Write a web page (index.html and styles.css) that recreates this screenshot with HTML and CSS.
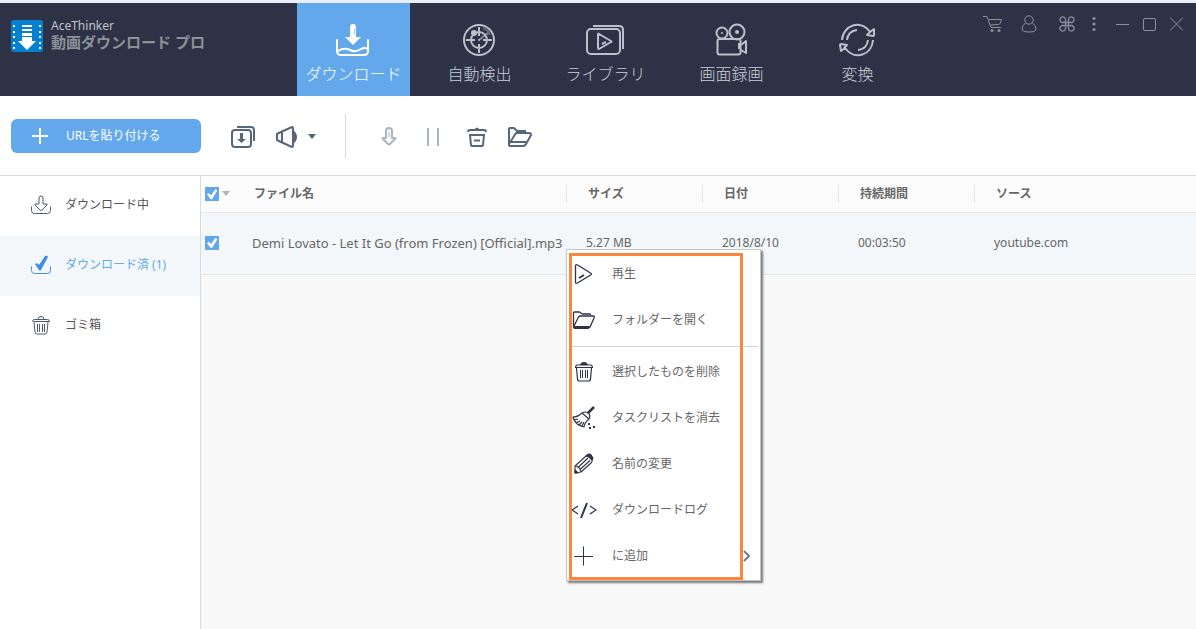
FILE: index.html
```html
<!DOCTYPE html>
<html lang="ja">
<head>
<meta charset="utf-8">
<title>AceThinker 動画ダウンロード プロ</title>
<link rel="stylesheet" href="styles.css">
</head>
<body>
<div class="app">
  <header class="titlebar">
    <div class="brand">
      <svg class="brand-logo" width="32" height="32" viewBox="0 0 32 32" aria-hidden="true">
        <rect width="32" height="32" rx="3" fill="#0580cf"/>
        <g fill="#fff">
          <path d="M2 5h2v2H2zM2 11h2v2H2zM2 16h2v2H2zM2 22h2v2H2zM2 27h2v2H2zM28 5h2v2h-2zM28 11h2v2h-2zM28 16h2v2h-2zM28 22h2v2h-2zM28 27h2v2h-2z"/>
          <path d="M11 5h10v2H11zM11 9h10v2H11zM11 13h10v3H11zM11 17h10v4h4l-9 9-9-9h4z"/>
        </g>
      </svg>
      <div class="brand-text">
        <span class="brand-maker">AceThinker</span>
        <span class="brand-name">動画ダウンロード プロ</span>
      </div>
    </div>
    <nav class="tabs">
      <button class="tab tab-active">
        <svg width="36" height="34" viewBox="0 0 36 34" fill="none" stroke="#fff" stroke-width="2" stroke-linecap="round">
          <path d="M17 1c2 0 3 1 3 3v10h5l-8 8-8-8h5V4c0-2 1-3 3-3z" fill="#fff" stroke="none"/>
          <path d="M18.500 6v5" stroke="#9cc8f4" stroke-width="1"/>
          <path d="M1 17v11q0 4 4 4h23q4 0 4-4V17"/>
          <path d="M2 28c5-3 8-3 12-1s8 1 11-1q4-2 7 0"/>
        </svg>
        <span>ダウンロード</span>
      </button>
      <button class="tab">
        <svg width="34" height="34" viewBox="0 0 34 34" fill="none" stroke="#bac1cb" stroke-width="2">
          <circle cx="16" cy="17" r="15"/><circle cx="16" cy="17" r="8"/>
          <path d="M16 4v4M16 26v4M3 17h4M25 17h4M16 10v3M16 21v3M9 17h3M20 17h3"/>
          <path d="M16 17l9-7" opacity=".6"/><path d="M20 5c3 1 6 4 7 7" opacity=".4"/>
          <circle cx="11" cy="10" r="3" fill="#bac1cb" stroke="none"/><circle cx="16" cy="17" r="1" fill="#bac1cb" stroke="none"/>
        </svg>
        <span>自動検出</span>
      </button>
      <button class="tab">
        <svg width="40" height="34" viewBox="0 0 40 34" fill="none" stroke="#bac1cb" stroke-width="2" stroke-linejoin="round">
          <rect x="1" y="6" width="33" height="25" rx="4"/>
          <path d="M7 3h26q4 0 4 4v19"/>
          <path d="M12 11q0-1 1 0l12 7q1 1 0 1l-12 7q-1 0-1-1z"/><path d="M16 21l4-2"/>
        </svg>
        <span>ライブラリ</span>
      </button>
      <button class="tab">
        <svg width="34" height="34" viewBox="0 0 34 34" fill="none" stroke="#bac1cb" stroke-width="2" stroke-linejoin="round">
          <circle cx="7" cy="10" r="5.500"/><circle cx="22" cy="9" r="7.500"/>
          <circle cx="7" cy="10" r="1" fill="#bac1cb" stroke="none"/><circle cx="22" cy="9" r="2" fill="#bac1cb" stroke="none"/>
          <rect x="2.500" y="16" width="23" height="15.500" rx="2"/>
          <path d="M26 22l5-4v12l-5-3M24 20v6"/>
        </svg>
        <span>画面録画</span>
      </button>
      <button class="tab">
        <svg width="38" height="34" viewBox="0 0 38 34" fill="none" stroke="#bac1cb" stroke-width="2" stroke-linejoin="round">
          <path d="M3 17C4 2 22-4 31 9l4-3v6q0 1-1 1l-6-1 3-3"/>
          <path d="M34 17c-1 15-18 21-28 8l-4 3-1-6q0-1 1-1l6 1-3 3"/>
          <path d="M8 17q1-9 10-10M29 17q-1 9-10 10"/>
        </svg>
        <span>変換</span>
      </button>
    </nav>
    <div class="window-tools">
      <button aria-label="カート"><svg width="20" height="18" viewBox="0 0 20 18" fill="none" stroke="#8b919b"><path d="M0 1.500h4l4 11h10M6 4.500h12.500q-1 5-3 5l-8 .500"/><circle cx="9" cy="15.500" r="1.500" fill="#8b919b" stroke="none"/><circle cx="16" cy="15.500" r="1.500" fill="#8b919b" stroke="none"/></svg></button>
      <button class="tool-user" aria-label="アカウント"><svg width="16" height="18" viewBox="0 0 16 18" fill="none" stroke="#8b919b"><circle cx="8" cy="5" r="4.200"/><path d="M4.500 8Q1 10.500 1 14q0 3 7 3t7-3q0-3.500-3.500-6"/></svg></button>
      <button class="tool-grid" aria-label="ツール"><svg width="16" height="16" viewBox="0 0 16 16" fill="none" stroke="#8b919b" stroke-width="1.300"><path d="M6.500 12V4A2.800 2.800 0 1 0 4 6.500h8A2.800 2.800 0 1 0 9.500 4v8A2.800 2.800 0 1 0 12 9.500H4A2.800 2.800 0 1 0 6.500 12z"/></svg></button>
      <button class="tool-more" aria-label="メニュー"><svg width="4" height="16" viewBox="0 0 4 16" fill="#8b919b"><circle cx="2" cy="2.500" r="1.600"/><circle cx="2" cy="8" r="1.600"/><circle cx="2" cy="13.500" r="1.600"/></svg></button>
      <button class="tool-min" aria-label="最小化"><svg width="13" height="14" viewBox="0 0 13 14" stroke="#8b919b"><path d="M0 7.500h13"/></svg></button>
      <button class="tool-max" aria-label="最大化"><svg width="13" height="14" viewBox="0 0 13 14" fill="none" stroke="#8b919b"><rect x=".500" y="1.500" width="12" height="12" rx="1.500"/></svg></button>
      <button class="tool-close" aria-label="閉じる"><svg width="13" height="14" viewBox="0 0 13 14" fill="none" stroke="#8b919b"><path d="M0 .500l13 13M13 .500l-13 13"/></svg></button>
    </div>
  </header>

  <div class="toolbar">
    <button class="paste">
      <svg width="16" height="16" viewBox="0 0 16 16" stroke="#fff" stroke-width="2"><path d="M8 0v16M0 8h16"/></svg>
      <span>URLを貼り付ける</span>
    </button>
    <div class="tools">
      <button aria-label="一括ダウンロード"><svg width="24" height="24" viewBox="0 0 24 24" fill="none" stroke="#56677a" stroke-width="2"><rect x="1" y="5" width="19" height="17" rx="3"/><path d="M6 2h14q3 0 3 3v11"/><path d="M9 8h3v6h3l-4.500 4L6 14h3z" fill="#56677a" stroke="none"/></svg></button>
      <button class="tool-horn" aria-label="通知"><svg width="22" height="24" viewBox="0 0 22 24" fill="none" stroke="#56677a" stroke-width="2" stroke-linejoin="round"><path d="M1 9l4-2 11-5q1 0 1 1v18q0 1-1 1L5 17l-4-2zM6 7v10"/><path d="M17 5q4 3 4 7t-4 7z" fill="#56677a" stroke="none"/></svg></button>
      <button class="tool-arrow" aria-label="通知メニュー"><svg width="8" height="6" viewBox="0 0 8 6" fill="#56677a"><path d="M0 0h8L4 5z"/></svg></button>
    </div>
    <div class="tools tools-second">
      <button aria-label="開始"><svg width="16" height="20" viewBox="0 0 16 20" fill="none" stroke="#acb5be" stroke-width="2" stroke-linejoin="round"><path d="M5 11V4q0-3 3-3t3 3v7h3q1 0 0 1l-5 5q-1 1-2 0l-5-5q-1-1 0-1z"/><path d="M8 5v5" stroke-width="1"/></svg></button>
      <button class="tool-pause" aria-label="一時停止"><svg width="12" height="20" viewBox="0 0 12 20" stroke="#acb5be" stroke-width="2"><path d="M1 1v18M11 1v18"/></svg></button>
      <button class="tool-trash" aria-label="削除"><svg width="20" height="20" viewBox="0 0 20 20" fill="none" stroke="#56677a" stroke-width="2" stroke-linejoin="round"><path d="M1 5q0-2 2-2h14q2 0 2 2M2 8h16M3 8l1 10q0 1 1 1h10q1 0 1-1l1-10M7 13.500h6"/><path d="M7 3q3-5 6 0z" fill="#56677a" stroke="none"/></svg></button>
      <button class="tool-folder" aria-label="フォルダー"><svg width="24" height="20" viewBox="0 0 24 20" fill="none" stroke="#56677a" stroke-width="2" stroke-linejoin="round"><path d="M1 18V2q0-1 1-1h4l3 3h9M1 18q0 1 1 1h13q2 0 3-2l5-9q0-2-2-2H8L1 17M3 15h15"/></svg></button>
    </div>
  </div>

  <div class="workspace">
    <nav class="sidebar">
      <a class="side-item" href="#downloading">
        <svg width="20" height="20" viewBox="0 0 20 20" fill="none" stroke="#4e5d70" stroke-linejoin="round"><path d="M.500 11.500v4q0 3 3 3h13q3 0 3-3v-4"/><path d="M8 9V3q0-2 2-2t2 2v6h3q2 0 1 1l-5 5q-1 1-2 0l-5-5q-1-1 1-1z"/></svg>
        <span>ダウンロード中</span>
      </a>
      <a class="side-item side-active" href="#downloaded">
        <svg width="20" height="20" viewBox="0 0 20 20" fill="none" stroke="#3d8fe6"><path d="M.500 11.500v4q0 3 3 3h13q3 0 3-3v-4"/><path d="M4 9q2-2 4 1l6-9q2-1 3 1L10 15q-1 1-2 0z" fill="#3d8fe6" stroke="none"/></svg>
        <span>ダウンロード済 (1)</span>
      </a>
      <a class="side-item" href="#trash">
        <svg width="20" height="20" viewBox="0 0 20 20" fill="none" stroke="#4e5d70" stroke-linejoin="round"><path d="M1.500 6.500q0-2 2-2h13q2 0 2 2M2.500 6.500h16M7 4.500q0-3 3-3t3 3M3 7l1 10q0 2 2 2h8q2 0 2-2l1-10M6.500 9v8M8.500 9v8M11.500 9v8M13.500 9v8"/></svg>
        <span>ゴミ箱</span>
      </a>
    </nav>

    <main class="content">
      <table class="files">
        <colgroup><col class="col-check"><col><col class="col-info"><col class="col-info"><col class="col-info"><col class="col-last"></colgroup>
        <thead>
          <tr>
            <th><div class="check-cell"><input type="checkbox" class="check" aria-label="すべて選択" checked><svg width="8" height="6" viewBox="0 0 8 6" fill="#acb5be"><path d="M0 0h8L4 5z"/></svg></div></th>
            <th>ファイル名</th>
            <th class="ruled">サイズ</th>
            <th class="ruled">日付</th>
            <th class="ruled">持続期間</th>
            <th class="ruled">ソース</th>
          </tr>
        </thead>
        <tbody>
          <tr>
            <td><div class="check-cell"><input type="checkbox" class="check" aria-label="選択" checked></div></td>
            <td class="file-name">Demi Lovato - Let It Go (from Frozen) [Official].mp3</td>
            <td>5.27 MB</td>
            <td>2018/8/10</td>
            <td>00:03:50</td>
            <td>youtube.com</td>
          </tr>
        </tbody>
      </table>

      <div class="menu" role="menu">
        <button class="menu-item" role="menuitem"><svg width="26" height="24" viewBox="0 0 26 24" fill="none" stroke="#2d3348" stroke-width="1.300" stroke-linejoin="round"><path d="M4.500 4q0-2 2-1l13 8q2 1 0 2l-13 8q-2 1-2-1z"/><path d="M8 16l5-3" stroke-width="2"/></svg><span>再生</span></button>
        <button class="menu-item" role="menuitem"><svg width="26" height="24" viewBox="0 0 26 24" fill="none" stroke="#2d3348" stroke-width="1.300" stroke-linejoin="round"><path d="M2.500 18V5q0-1 1-1h5l3 2h7q1 0 1 1M2.500 19L7 10q1-2 2-2h13q2 0 1 2l-4 9q-1 1-2 1H3.500q-1 0-1-1"/><path d="M3 18h16l-2 3H3z" fill="#2d3348" stroke="none"/></svg><span>フォルダーを開く</span></button>
        <hr class="menu-rule">
        <button class="menu-item" role="menuitem"><svg width="26" height="24" viewBox="0 0 26 24" fill="none" stroke="#2d3348" stroke-width="1.200" stroke-linejoin="round"><path d="M4.500 8q0-3 2-3h13q2 0 2 3M4.500 7.500h17M5.500 8l1 11q0 2 2 2h9q2 0 2-2l1-11"/><path d="M9.500 10v8M11.500 10v8M14.500 10v8M16.500 10v8" stroke-width="1"/><path d="M9 5q1-3 4-3t4 3z" fill="#2d3348" stroke="none"/></svg><span>選択したものを削除</span></button>
        <button class="menu-item" role="menuitem"><svg width="26" height="24" viewBox="0 0 26 24" fill="none" stroke="#2d3348" stroke-width="1.200" stroke-linejoin="round"><path d="M23 1l-6 6" stroke-width="2.500"/><path d="M11 7q3-2 6 0t1 6zM11 7q-4 4-9 4 2 8 11 10 1-5 5-8M3 14l4-1M5 17l4-2M8 19l3-3M11 20l2-4"/><path d="M17 17h2v2h-2zM18 21h2v2h-2zM22 20h2v2h-2z" fill="#2d3348" stroke="none"/></svg><span>タスクリストを消去</span></button>
        <button class="menu-item" role="menuitem"><svg width="26" height="24" viewBox="0 0 26 24" fill="none" stroke="#2d3348" stroke-width="1.100" stroke-linejoin="round"><path d="M4 14L15 4q2-1 4 0l2 3q1 2-1 4L10 20l-6 1zM4 14q5 0 6 6M6.500 16L17 6M8.500 18L19 8.500"/><path d="M15 4q3-3 5-1l2 3-1 2-3-3zM4 18l3 3H4z" fill="#2d3348"/></svg><span>名前の変更</span></button>
        <button class="menu-item" role="menuitem"><svg width="26" height="24" viewBox="0 0 26 24" fill="none" stroke="#2d3348" stroke-width="1.300"><path d="M7 8l-6 4 6 4M19 8l6 4-6 4"/><path d="M16 5L10 20" stroke-width="2"/></svg><span>ダウンロードログ</span></button>
        <button class="menu-item" role="menuitem"><svg width="26" height="24" viewBox="0 0 26 24" fill="none" stroke="#2d3348"><path d="M12.500 2.500v19M3 12.500h19"/></svg><span>に追加</span><svg class="menu-more" width="8" height="12" viewBox="0 0 8 12" fill="none" stroke="#73788a" stroke-width="2"><path d="M1 1l5 5-5 5"/></svg></button>
        <div class="highlight"></div>
      </div>
    </main>
  </div>
</div>
</body>
</html>
```

FILE: styles.css
```css
* { box-sizing: border-box; }

body {
  margin: 0;
  font-family: "Noto Sans", "Noto Sans CJK JP", sans-serif;
  font-size: 12px;
  line-height: 20px;
  color: #666;
}

button {
  margin: 0;
  padding: 0;
  border: 0;
  background: none;
  font: inherit;
  color: inherit;
}

svg { display: block; flex: none; }

.app {
  display: flex;
  flex-direction: column;
  min-height: 100vh;
  border-top: 3px solid #eaeff7;
}

.titlebar {
  display: flex;
  align-items: stretch;
  background: #2d3246;
}

.brand {
  display: flex;
  width: 297px;
  padding: 15px 0 0 11px;
  gap: 8px;
}

.brand-logo { margin-top: 2px; }
.brand-text { display: flex; flex-direction: column; line-height: 16px; }
.brand-maker { font-size: 12px; color: #bfc4c9; }
.brand-name { font-size: 15px; font-weight: 700; color: #8b9296; }

.tabs { display: flex; gap: 13px; }

.tab {
  display: flex;
  flex-direction: column;
  align-items: center;
  gap: 5px;
  width: 113px;
  padding: 20px 0 10px;
  font-size: 16px;
  font-weight: 300;
  line-height: 24px;
  color: #c8ced6;
}

.tab-active { background: #63a8eb; color: #fff; }

.window-tools {
  display: flex;
  align-items: center;
  height: 18px;
  margin: 12px 13px 0 auto;
}

.tool-user { margin-left: 18px; }
.tool-grid { margin-left: 22px; }
.tool-more { margin-left: 17px; }
.tool-min { margin-left: 20px; }
.tool-max, .tool-close { margin-left: 14px; }

.toolbar {
  display: flex;
  align-items: center;
  height: 80px;
  padding-left: 11px;
  border-bottom: 1px solid #d6dae6;
  background: #fff;
}

.paste {
  display: flex;
  align-items: center;
  gap: 18px;
  width: 190px;
  height: 34px;
  padding-left: 21px;
  border-radius: 6px;
  background: #63a8eb;
  color: #fff;
}

.tools {
  display: flex;
  align-items: center;
  padding-top: 2px;
  padding-left: 30px;
}

.tool-horn { margin-left: 21px; }
.tool-arrow { margin-left: 10px; }

.tools-second {
  height: 44px;
  margin-left: 29px;
  padding-left: 35px;
  border-left: 1px solid #d6dae6;
}

.tool-pause { margin-left: 30px; }
.tool-trash { margin-left: 28px; }
.tool-folder { margin-left: 21px; }

.workspace { display: flex; flex: 1; }

.sidebar {
  width: 201px;
  border-right: 1px solid #d6dae6;
  background: #fff;
}

.side-item {
  display: flex;
  align-items: center;
  gap: 14px;
  height: 60px;
  padding: 0 0 2px 31px;
  color: #555;
  text-decoration: none;
}

.side-active { background: #f3f7fa; color: #63a8eb; }

.content { position: relative; flex: 1; background: #f9f9f9; }

.files {
  width: 100%;
  border-collapse: collapse;
  table-layout: fixed;
}

.col-check { width: 33px; }
.col-info { width: 136px; }
.col-last { width: 222px; }

.files th, .files td {
  padding: 0 0 0 18px;
  text-align: left;
  white-space: nowrap;
}

.files th {
  height: 36px;
  padding-top: 1px;
  padding-left: 20px;
  border-bottom: 1px solid #e3e8eb;
  background: #fcfcfc;
  font-weight: 700;
}

.files th.ruled {
  padding-left: 22px;
  background: #fcfcfc linear-gradient(#dfe8e8, #dfe8e8) no-repeat 0 center / 1px 18px;
}

.files td {
  height: 62px;
  border-bottom: 1px solid #e3e8eb;
  background: #f3f7fa;
}

.files td + td + td { padding-left: 20px; }
.files th:first-child, .files td:first-child { padding-left: 4px; }
.files .file-name { font-size: 13px; }

.check-cell { display: flex; align-items: center; gap: 3px; }

.check {
  appearance: none;
  display: grid;
  width: 14px;
  height: 14px;
  margin: 0;
  background: #63a8eb;
}

.check:checked::before {
  content: "";
  background: #fff;
  clip-path: polygon(14% 50%, 28% 42%, 43% 58%, 74% 15%, 88% 24%, 50% 86%, 40% 86%);
}

.menu {
  position: absolute;
  top: 73px;
  left: 365px;
  width: 195px;
  padding: 1px 0;
  border: 1px solid #c6c6c6;
  background: #fff;
  box-shadow: 2px 2px 2px #777;
}

.menu-item {
  display: flex;
  align-items: center;
  gap: 15px;
  width: 100%;
  height: 46px;
  padding: 0 9px 0 4px;
}

.menu-more { margin-left: auto; }

.menu-rule {
  height: 1px;
  margin: 3px 2px 2px 5px;
  border: 0;
  background: #ced3e2;
}

.highlight {
  position: absolute;
  top: 3px;
  left: 2px;
  right: 17px;
  bottom: 0;
  border: 3px solid #fa873b;
  pointer-events: none;
}
```
